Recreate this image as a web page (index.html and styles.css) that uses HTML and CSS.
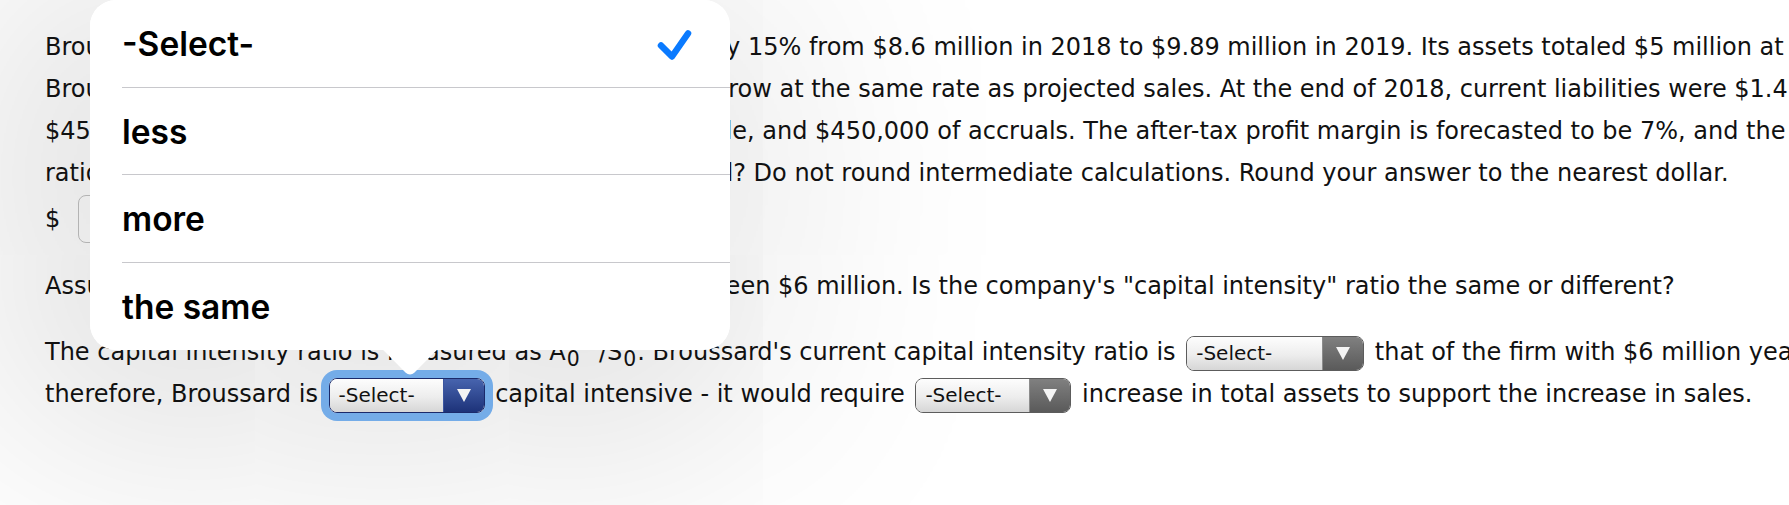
FILE: index.html
```html
<!DOCTYPE html>
<html lang="en">
<head>
    <meta charset="UTF-8">
    <meta name="viewport" content="width=device-width, initial-scale=1.0">
    <title>Broussard Skateboard - AFN</title>
    <link rel="stylesheet" href="styles.css">
</head>
<body>
    <div class="question">
        <p class="text">
            Broussard Skateboard's sales are expected to increase by 15% from $8.6 million in 2018 to $9.89 million in 2019. Its assets totaled $5 million at the end of 2018.<br>
            Broussard is already at full capacity, so its assets must grow at the same rate as projected sales. At the end of 2018, current liabilities were $1.4 million, consisting of<br>
            $450,000 of accounts payable, $500,000 of notes payable, and $450,000 of accruals. The after-tax profit margin is forecasted to be 7%, and the forecasted payout<br>
            ratio is 60%. What are the firm's additional funds needed? Do not round intermediate calculations. Round your answer to the nearest dollar.
        </p>
        <div class="answer-row">
            <span>$</span>
            <span class="answer-box"></span>
        </div>
        <p class="text spaced">
            <span class="tight">Assume that Broussard's assets at the end of 2018 had</span> been $6 million. Is the company's "capital intensity" ratio the same or different?
        </p>
        <p class="text">
            The capital intensity ratio is measured as A<sub>0</sub><sup>*</sup>/S<sub>0</sub>. Broussard's current capital intensity ratio is
            <span class="dropdown wide"><span class="dropdown-label">-Select-</span><span class="dropdown-arrow"></span></span>
            that of the firm with $6 million year-end assets;<br>
            therefore, Broussard is
            <span class="dropdown focused"><span class="dropdown-label">-Select-</span><span class="dropdown-arrow"></span></span>
            capital intensive - it would require
            <span class="dropdown"><span class="dropdown-label">-Select-</span><span class="dropdown-arrow"></span></span>
            increase in total assets to support the increase in sales.
        </p>

        <!-- тень под открытым списком, ниже текста -->
        <div class="picker-shade"></div>

        <!-- открытый список выбора над вопросом -->
        <div class="picker">
            <div class="picker-row">
                <span>-Select-</span>
                <svg class="check" width="40" height="40" viewBox="0 0 40 40">
                    <path d="M7 21.5 L18 32.5 L34 9.5" fill="none" stroke="#0a7aff" stroke-width="6.5" stroke-linecap="round" stroke-linejoin="round"/>
                </svg>
            </div>
            <div class="picker-row"><span>less</span></div>
            <div class="picker-row"><span>more</span></div>
            <div class="picker-row"><span>the same</span></div>
        </div>
    </div>
</body>
</html>
```

FILE: styles.css
```css
body {
    margin: 0;
    font-family: "DejaVu Sans", Verdana, sans-serif;
    font-size: 24px;
    color: #111;
    background-color: #fff;
    overflow: hidden;
}

.question {
    position: relative;
    padding: 25.5px 0 0 45px;
    height: 505px;
    box-sizing: border-box;
}

.text {
    margin: 0;
    line-height: 42.3px;
    white-space: nowrap;
}

.text.spaced {
    margin-bottom: 24px;
}

.tight {
    word-spacing: -0.9px;
}

sub,
sup {
    font-size: 0.85em;
    line-height: 0;
}

sub {
    padding: 0 1px;
}

sup {
    padding: 0 4px;
}

.answer-row {
    display: flex;
    align-items: center;
    gap: 18px;
    height: 48px;
    margin-bottom: 22px;
}

.answer-box {
    width: 170px;
    height: 48px;
    box-sizing: border-box;
    border: 1.5px solid #b3b3b3;
    border-radius: 8px;
}

.dropdown {
    display: inline-flex;
    vertical-align: baseline;
    width: 156px;
    height: 35px;
    box-sizing: border-box;
    margin: 0 3px;
    border: 1.5px solid #5c5c5c;
    border-radius: 8px;
    overflow: hidden;
    font-size: 20px;
    color: #111;
}

.dropdown.wide {
    width: 178px;
}

.dropdown-label {
    flex: 1;
    padding-left: 9px;
    line-height: 32px;
    background: linear-gradient(#fdfdfd, #ededed 55%, #d6d6d6);
}

.dropdown-arrow {
    width: 40px;
    display: flex;
    align-items: center;
    justify-content: center;
    border-left: 1px solid #8c8c8c;
    background: linear-gradient(#808080, #5a5a5a);
}

.dropdown-arrow::after {
    content: "";
    border-left: 7px solid transparent;
    border-right: 7px solid transparent;
    border-top: 13px solid #f4f4f4;
}

.dropdown.focused {
    border-color: #1b2a6b;
    box-shadow: 0 0 0 8px #74ace8;
}

.dropdown.focused .dropdown-arrow {
    border-left-color: #3b55a0;
    background: linear-gradient(#4764ae, #1d3279);
}

.picker-shade {
    position: absolute;
    left: 90px;
    top: 0;
    width: 640px;
    height: 350px;
    border-radius: 26px;
    box-shadow: -30px 20px 400px 60px rgba(0, 0, 0, 0.14);
    z-index: -1;
}

.picker {
    position: absolute;
    left: 90px;
    top: 0;
    width: 640px;
    padding-left: 32px;
    box-sizing: border-box;
    background-color: #fff;
    border-radius: 26px;
    font-family: Inter, "Noto Sans", sans-serif;
    font-weight: 600;
    font-size: 33.5px;
    color: #000;
    z-index: 5;
}

.picker::after {
    content: "";
    position: absolute;
    left: 301px;
    bottom: -19px;
    width: 38px;
    height: 38px;
    background-color: #fff;
    transform: rotate(45deg);
    border-bottom-right-radius: 6px;
}

.picker-row {
    height: 87.5px;
    box-sizing: border-box;
    padding: 2px 36px 0 0;
    display: flex;
    align-items: center;
    justify-content: space-between;
    border-bottom: 1px solid #c8c8cc;
}

.picker-row:last-child {
    border-bottom: none;
}

.check {
    display: block;
}
```
